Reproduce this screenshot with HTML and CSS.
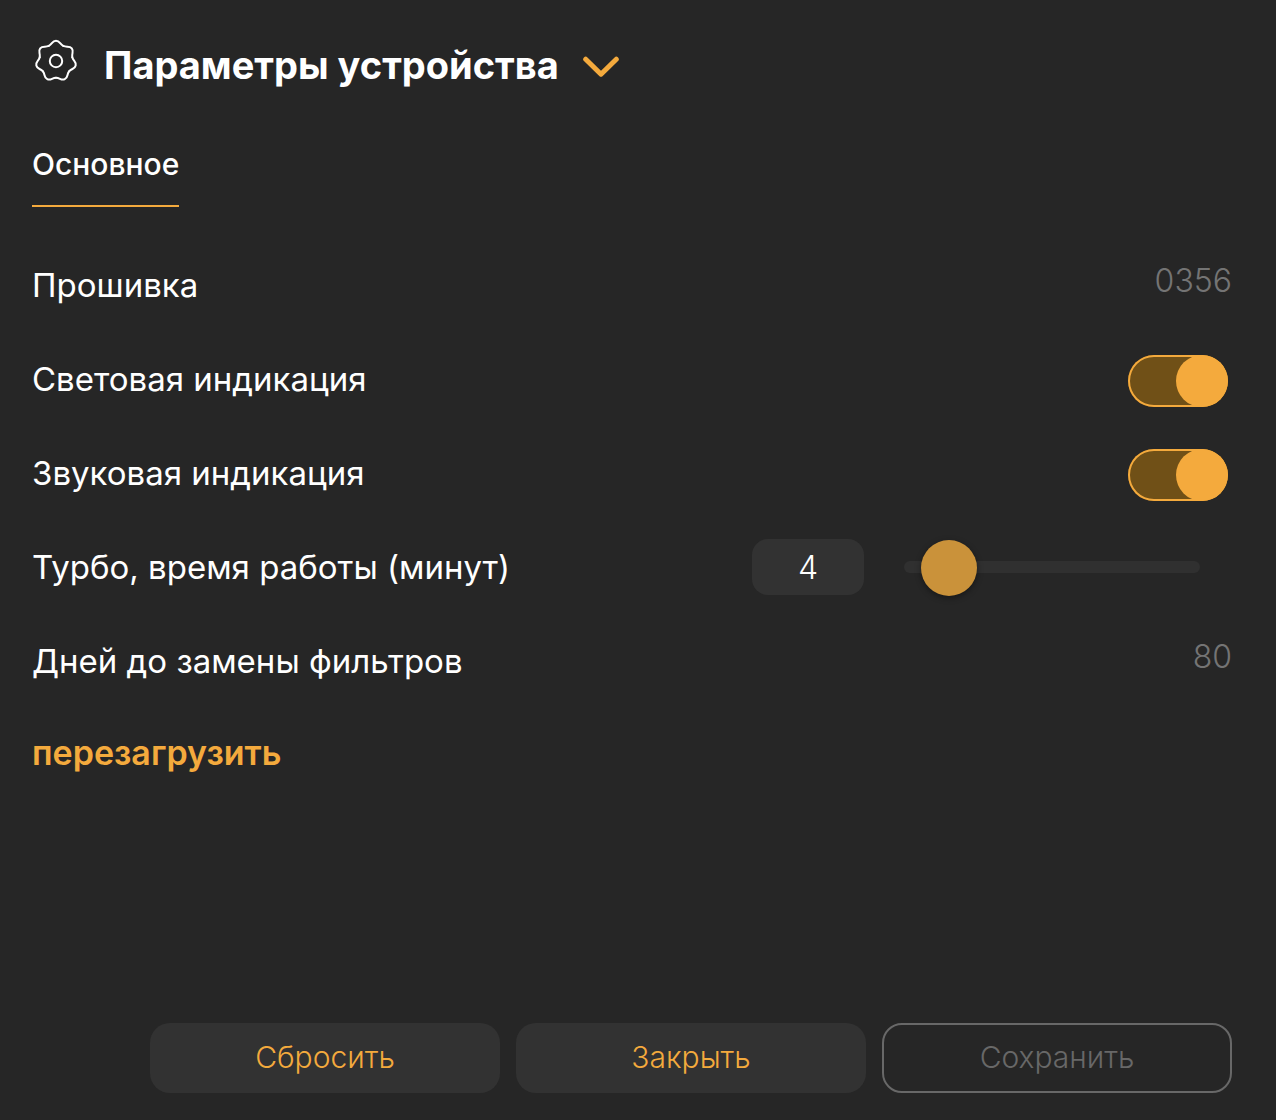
FILE: index.html
```html
<!DOCTYPE html>
<html lang="ru">
<head>
<meta charset="utf-8">
<meta name="viewport" content="width=device-width, initial-scale=1">
<title>Параметры устройства</title>
<link rel="stylesheet" href="styles.css">
</head>
<body>
<main class="panel">
  <header class="header">
    <svg class="gear" viewBox="-24 -24 48 48" aria-hidden="true">
      <defs>
        <path id="lobe" d="M-7.25 -15.05C-3.65 -16.8 -4 -20.2 0 -20.2S3.65 -16.8 7.25 -15.05"/>
      </defs>
      <use href="#lobe"/>
      <use href="#lobe" transform="rotate(51.4286)"/>
      <use href="#lobe" transform="rotate(102.857)"/>
      <use href="#lobe" transform="rotate(154.286)"/>
      <use href="#lobe" transform="rotate(205.714)"/>
      <use href="#lobe" transform="rotate(257.143)"/>
      <use href="#lobe" transform="rotate(308.571)"/>
      <circle r="6.2"/>
    </svg>
    <h1 class="title">Параметры устройства</h1>
    <button class="expand" type="button" aria-label="Выбрать раздел">
      <svg class="chevron" viewBox="0 0 36 22" aria-hidden="true"><path d="M2.7 3.2L18 18.2L33.3 3.2"/></svg>
    </button>
  </header>

  <nav class="tabs">
    <a class="tab" href="#main" aria-current="page">Основное</a>
  </nav>

  <form class="form" id="main">
    <div class="row">
      <span class="label">Прошивка</span>
      <span class="value">0356</span>
    </div>
    <div class="row">
      <label class="label" for="light">Световая индикация</label>
      <input class="toggle" id="light" type="checkbox" role="switch" checked>
    </div>
    <div class="row">
      <label class="label" for="sound">Звуковая индикация</label>
      <input class="toggle" id="sound" type="checkbox" role="switch" checked>
    </div>
    <div class="row">
      <label class="label" for="turbo">Турбо, время работы (минут)</label>
      <div class="amount">
        <input class="number" id="turbo" type="text" inputmode="numeric" value="4">
        <input class="slider" type="range" min="2" max="30" value="4" aria-label="Турбо, время работы">
      </div>
    </div>
    <div class="row">
      <span class="label">Дней до замены фильтров</span>
      <span class="value">80</span>
    </div>
    <div class="row">
      <button class="reboot" type="button">перезагрузить</button>
    </div>
    <footer class="actions">
      <button class="button" type="reset">Сбросить</button>
      <button class="button" type="button">Закрыть</button>
      <button class="button button-outline" type="submit" disabled>Сохранить</button>
    </footer>
  </form>
</main>
</body>
</html>
```

FILE: styles.css
```css
* {
  box-sizing: border-box;
}

body {
  margin: 0;
  background: #262626;
  color: #fff;
  font-family: Inter, "Liberation Sans", sans-serif;
}

button,
input {
  margin: 0;
  padding: 0;
  border: 0;
  background: none;
  color: inherit;
  font: inherit;
}

.panel {
  display: flex;
  flex-direction: column;
  min-height: 100vh;
  padding: 37px 44px 27px 32px;
}

.header {
  display: flex;
  align-items: center;
}

.gear {
  width: 48px;
  height: 48px;
  margin: 0 24px 8px 0;
  fill: none;
  stroke: #fff;
  stroke-width: 2;
  stroke-linecap: round;
}

.title {
  margin: 0;
  font-size: 38px;
  line-height: 56px;
  font-weight: 700;
}

.expand {
  display: flex;
  margin: 4px 0 0 24px;
}

.chevron {
  width: 36px;
  height: 22px;
  fill: none;
  stroke: #f4aa3d;
  stroke-width: 5;
  stroke-linecap: round;
  stroke-linejoin: round;
}

.tabs {
  display: flex;
  margin-top: 51px;
}

.tab {
  padding-bottom: 21px;
  border-bottom: 2px solid #f4aa3d;
  color: #fff;
  font-size: 30px;
  line-height: 40px;
  font-weight: 500;
  text-decoration: none;
}

.form {
  display: flex;
  flex: 1;
  flex-direction: column;
  padding-top: 31px;
}

.row {
  display: flex;
  align-items: center;
  justify-content: space-between;
  min-height: 94px;
}

.label {
  font-size: 33px;
  line-height: 44px;
}

.value {
  padding-bottom: 9px;
  color: #747474;
  font-size: 32px;
  line-height: 40px;
  font-weight: 300;
}

.toggle {
  appearance: none;
  display: flex;
  justify-content: flex-end;
  width: 100px;
  height: 52px;
  margin: 4px 4px 0 0;
  overflow: hidden;
  border-radius: 26px;
  background: #705017;
  box-shadow: inset 0 0 0 2px #f4aa3d;
}

.toggle::before {
  content: "";
  width: 52px;
  height: 52px;
  border-radius: 50%;
  background: #f4aa3d;
}

.toggle:not(:checked) {
  justify-content: flex-start;
}

.amount {
  display: flex;
  align-items: center;
  gap: 40px;
  margin-right: 32px;
}

.number {
  width: 112px;
  height: 56px;
  border-radius: 16px;
  background: #323232;
  font-size: 32px;
  font-weight: 300;
  text-align: center;
}

.slider {
  appearance: none;
  width: 296px;
  height: 56px;
}

.slider::-webkit-slider-runnable-track {
  height: 12px;
  border-radius: 6px;
  background: #303030;
}

.slider::-webkit-slider-thumb {
  appearance: none;
  width: 56px;
  height: 56px;
  margin-top: -21px;
  border-radius: 50%;
  background: #ca923a;
  box-shadow: 0 2px 6px rgba(0, 0, 0, 0.4);
}

.reboot {
  padding-bottom: 4px;
  color: #f4aa3d;
  font-size: 34px;
  line-height: 44px;
  font-weight: 600;
}

.actions {
  display: flex;
  justify-content: flex-end;
  gap: 16px;
  margin-top: auto;
}

.button {
  width: 350px;
  height: 70px;
  padding-bottom: 2px;
  border-radius: 20px;
  background: #323232;
  color: #f4aa3d;
  font-size: 30px;
  font-weight: 300;
}

.button-outline {
  border: 2px solid #686868;
  background: none;
  color: #686868;
}
```
